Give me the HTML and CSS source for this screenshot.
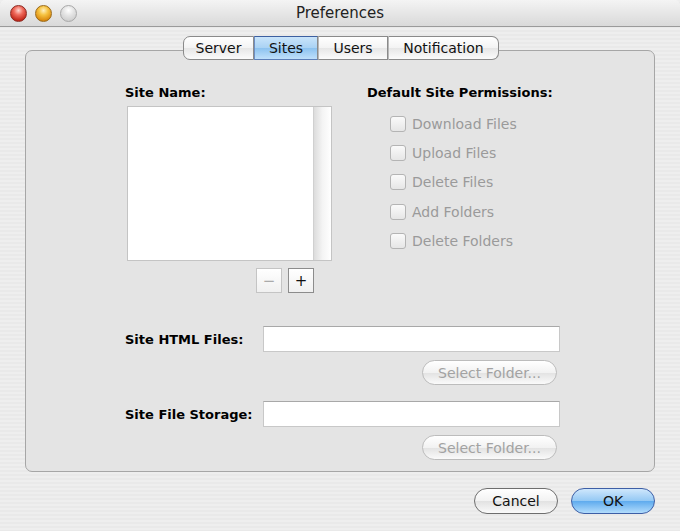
FILE: index.html
```html
<!DOCTYPE html>
<html lang="en">
<head>
    <meta charset="UTF-8">
    <title>Preferences</title>
    <link rel="stylesheet" href="styles.css">
</head>
<body>
    <div class="window">
        <div class="titlebar">
            <div class="lights">
                <span class="light light-close"></span>
                <span class="light light-min"></span>
                <span class="light light-zoom"></span>
            </div>
            <div class="title">Preferences</div>
        </div>

        <div class="content">
            <!-- Tabs -->
            <div class="tabs">
                <div class="tab tab-first tab-server">Server</div>
                <div class="tab tab-selected tab-sites">Sites</div>
                <div class="tab tab-users">Users</div>
                <div class="tab tab-last tab-notify">Notification</div>
            </div>

            <div class="tab-box">
                <div class="top-section">
                    <div class="sites-column">
                        <label class="bold-label">Site Name:</label>
                        <div class="site-list">
                            <div class="list-body"></div>
                            <div class="list-scroll"></div>
                        </div>
                        <div class="list-buttons">
                            <button class="square-btn square-disabled">&minus;</button>
                            <button class="square-btn">+</button>
                        </div>
                    </div>

                    <div class="perm-column">
                        <label class="bold-label">Default Site Permissions:</label>
                        <div class="perm-list">
                            <div class="perm"><span class="checkbox"></span>Download Files</div>
                            <div class="perm"><span class="checkbox"></span>Upload Files</div>
                            <div class="perm"><span class="checkbox"></span>Delete Files</div>
                            <div class="perm"><span class="checkbox"></span>Add Folders</div>
                            <div class="perm"><span class="checkbox"></span>Delete Folders</div>
                        </div>
                    </div>
                </div>

                <div class="folder-group">
                    <div class="folder-row">
                        <label class="bold-label folder-label">Site HTML Files:</label>
                        <input type="text" class="folder-input">
                    </div>
                    <div class="folder-btn-row">
                        <button class="pill-btn pill-disabled">Select Folder...</button>
                    </div>
                </div>

                <div class="folder-group">
                    <div class="folder-row">
                        <label class="bold-label folder-label">Site File Storage:</label>
                        <input type="text" class="folder-input">
                    </div>
                    <div class="folder-btn-row">
                        <button class="pill-btn pill-disabled">Select Folder...</button>
                    </div>
                </div>
            </div>

            <div class="dialog-buttons">
                <button class="pill-btn dialog-btn">Cancel</button>
                <button class="pill-btn dialog-btn pill-default">OK</button>
            </div>
        </div>
    </div>
</body>
</html>
```

FILE: styles.css
```css
body {
    margin: 0;
    font-family: "DejaVu Sans", "Lucida Grande", sans-serif;
    font-size: 13px;
    color: #000;
}
.window {
    width: 680px;
    height: 531px;
    overflow: hidden;
    background-color: #ececec;
    background-image: repeating-linear-gradient(to bottom, #eeeeee 0, #eeeeee 2px, #e9e9e9 2px, #e9e9e9 4px);
}

/* Title bar */
.titlebar {
    height: 27px;
    box-sizing: border-box;
    display: flex;
    align-items: center;
    background: linear-gradient(to bottom, #f4f4f4, #d9d9d9);
    border-bottom: 1px solid #9a9a9a;
    border-radius: 5px 5px 0 0;
}
.lights {
    display: flex;
    gap: 8px;
    padding-left: 10px;
    width: 110px;
    box-sizing: border-box;
}
.light {
    width: 17px;
    height: 17px;
    border-radius: 50%;
    box-sizing: border-box;
}
.light-close {
    background: radial-gradient(circle at 50% 30%, #ffd6d0 0, #ef6a5c 35%, #c42a1c 75%, #9a1a10 100%);
    border: 1px solid #8c2a22;
}
.light-min {
    background: radial-gradient(circle at 50% 30%, #fff0c0 0, #f6c342 35%, #dc8c10 75%, #a86008 100%);
    border: 1px solid #9a6a1a;
}
.light-zoom {
    background: radial-gradient(circle at 50% 30%, #ffffff 0, #e4e4e4 40%, #c4c4c4 100%);
    border: 1px solid #a8a8a8;
}
.title {
    flex: 1;
    text-align: center;
    padding-right: 110px;
    color: #222;
    font-size: 15px;
}

.content {
    padding: 9px 25px 0 25px;
}

/* Tabs */
.tabs {
    display: flex;
    justify-content: center;
    position: relative;
    z-index: 1;
    margin-bottom: -10px;
    padding-left: 2px;
}
.tab {
    height: 24px;
    line-height: 22px;
    box-sizing: border-box;
    text-align: center;
    background: linear-gradient(to bottom, #ffffff 0, #f3f3f3 50%, #e6e6e6 51%, #fbfbfb 100%);
    border: 1px solid #8a8a8a;
    border-left: 1px solid #b8b8b8;
    font-size: 14px;
    color: #111;
}
.tab-server { width: 71px; }
.tab-sites { width: 64px; }
.tab-users { width: 70px; }
.tab-notify { width: 111px; }
.tab-first {
    border-left: 1px solid #8a8a8a;
    border-radius: 7px 0 0 7px;
}
.tab-last {
    border-radius: 0 7px 7px 0;
}
.tab-selected {
    background: linear-gradient(to bottom, #c9e4fa 0, #a9d2f4 50%, #8cc2ef 51%, #bfe0fb 100%);
    border-top-color: #3c5fa0;
    border-bottom-color: #5c7fb8;
    border-left-color: #6e8fc4;
}

.tab-box {
    height: 422px;
    box-sizing: border-box;
    border: 1px solid #a6a6a6;
    border-radius: 7px;
    background: #e4e4e4;
    padding: 34px 0 0 99px;
}

.bold-label {
    display: block;
    font-weight: bold;
    font-size: 13px;
    color: #000;
}

.top-section {
    display: flex;
    gap: 35px;
}
.sites-column {
    width: 207px;
}
.sites-column .bold-label {
    margin-bottom: 6px;
}
.site-list {
    display: flex;
    margin-left: 2px;
    height: 153px;
    border: 1px solid #c4c4c4;
    background: #fff;
}
.list-body {
    flex: 1;
}
.list-scroll {
    width: 17px;
    border-left: 1px solid #d0d0d0;
    background: linear-gradient(to right, #dcdcdc, #f4f4f4 50%, #ffffff);
}
.list-buttons {
    display: flex;
    justify-content: flex-end;
    gap: 6px;
    padding-right: 18px;
    margin-top: 7px;
}
.square-btn {
    width: 26px;
    height: 25px;
    padding: 0;
    border: 1px solid #8c8c8c;
    background: linear-gradient(to bottom, #ffffff, #f0f0f0);
    font-family: "DejaVu Sans", sans-serif;
    font-size: 15px;
    color: #111;
}
.square-disabled {
    border-color: #c4c4c4;
    color: #aaa;
}

.perm-list {
    padding-left: 23px;
    margin-top: 9px;
}
.perm {
    display: flex;
    align-items: center;
    gap: 6px;
    height: 29.4px;
    color: #9a9a9a;
    font-size: 14px;
}
.checkbox {
    width: 16px;
    height: 16px;
    box-sizing: border-box;
    border: 1px solid #b4b4b4;
    border-radius: 3px;
    background: linear-gradient(to bottom, #fafafa, #e6e6e6);
}

/* Folder rows */
.folder-group {
    width: 435px;
}
.top-section + .folder-group {
    margin-top: 33px;
}
.folder-group + .folder-group {
    margin-top: 16px;
}
.folder-row {
    display: flex;
    align-items: center;
}
.folder-label {
    width: 138px;
    flex-shrink: 0;
}
.folder-input {
    width: 297px;
    height: 26px;
    box-sizing: border-box;
    border: 1px solid #c8c8c8;
    border-top-color: #a8a8a8;
    background: #fff;
    margin: 0;
}
.folder-btn-row {
    display: flex;
    justify-content: flex-end;
    padding-right: 3px;
    margin-top: 8px;
}

/* Pill buttons */
.pill-btn {
    height: 25px;
    border-radius: 13px;
    border: 1px solid #8a8a8a;
    background: linear-gradient(to bottom, #ffffff 0, #f2f2f2 50%, #e2e2e2 51%, #fafafa 100%);
    font-family: "DejaVu Sans", sans-serif;
    font-size: 14px;
    color: #111;
    padding: 0;
}
.pill-disabled {
    width: 135px;
    border-color: #bcbcbc;
    color: #a2a2a2;
}
.dialog-buttons {
    display: flex;
    justify-content: flex-end;
    gap: 13px;
    margin-top: 16px;
}
.dialog-btn {
    width: 84px;
    height: 26px;
    border-color: #6e6e6e;
}
.pill-default {
    background: linear-gradient(to bottom, #cfe7fc 0, #93c8f4 50%, #5fabee 51%, #b2dcfc 100%);
    border-color: #3d5ea6;
}
```
